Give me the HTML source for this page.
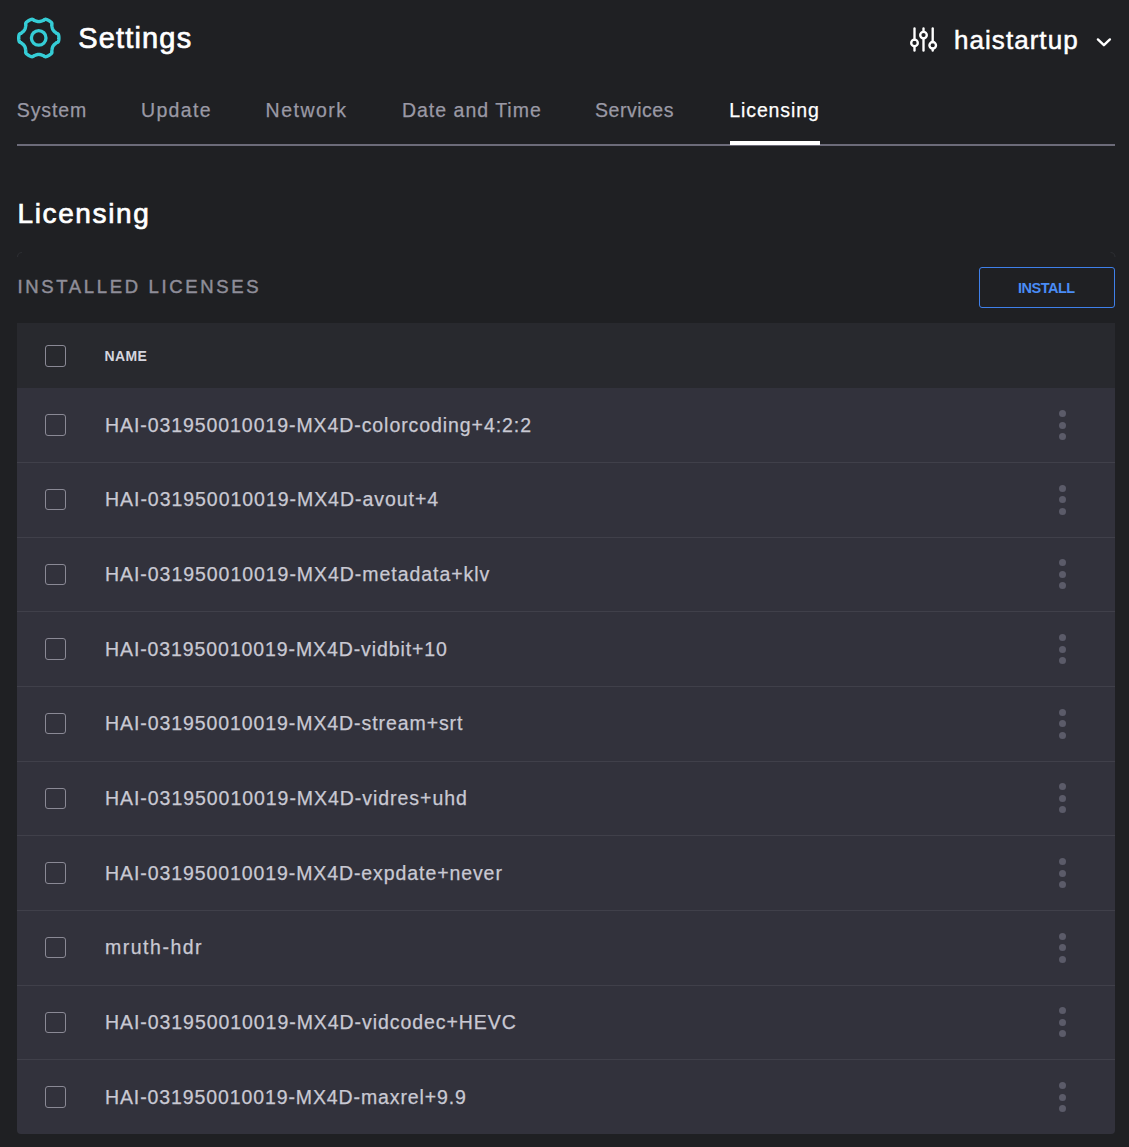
<!DOCTYPE html>
<html><head><meta charset="utf-8"><title>Settings - Licensing</title>
<style>
html,body{margin:0;padding:0;background:#1f2023;}
body{width:1129px;height:1147px;overflow:hidden;position:relative;font-family:"Liberation Sans",sans-serif;}
.t{position:absolute;line-height:1;white-space:nowrap;}
.abs{position:absolute;}
</style></head><body>
<svg class="abs" style="left:0;top:0" width="80" height="80" viewBox="0 0 80 80"><path d="M58.90 38.00 L58.90 38.35 L58.89 38.70 L58.87 39.05 L58.84 39.40 L58.81 39.75 L58.76 40.10 L58.71 40.44 L58.63 40.79 L58.53 41.13 L58.40 41.46 L58.20 41.77 L57.93 42.07 L57.53 42.33 L57.02 42.54 L56.43 42.72 L56.16 42.98 L55.88 43.22 L55.61 43.46 L55.34 43.70 L55.08 43.93 L54.82 44.15 L54.57 44.37 L54.33 44.59 L54.10 44.81 L53.89 45.04 L53.68 45.26 L53.49 45.49 L53.32 45.72 L53.15 45.96 L53.00 46.20 L52.87 46.45 L52.74 46.71 L52.63 46.98 L52.53 47.26 L52.44 47.55 L52.35 47.85 L52.28 48.16 L52.21 48.47 L52.14 48.80 L52.07 49.14 L52.01 49.48 L51.94 49.83 L51.87 50.18 L51.79 50.54 L51.70 50.90 L51.85 51.51 L51.91 52.06 L51.88 52.53 L51.77 52.92 L51.59 53.24 L51.37 53.53 L51.13 53.78 L50.87 54.02 L50.60 54.24 L50.32 54.45 L50.04 54.66 L49.74 54.85 L49.45 55.04 L49.15 55.23 L48.85 55.41 L48.54 55.58 L48.24 55.75 L47.92 55.91 L47.61 56.06 L47.29 56.20 L46.96 56.34 L46.64 56.46 L46.30 56.57 L45.96 56.65 L45.61 56.70 L45.24 56.69 L44.84 56.60 L44.42 56.39 L43.98 56.05 L43.52 55.63 L43.17 55.52 L42.82 55.41 L42.48 55.29 L42.14 55.18 L41.81 55.06 L41.48 54.95 L41.17 54.85 L40.86 54.75 L40.55 54.66 L40.25 54.58 L39.96 54.52 L39.66 54.47 L39.37 54.43 L39.09 54.41 L38.80 54.40 L38.51 54.41 L38.23 54.43 L37.94 54.47 L37.64 54.52 L37.35 54.58 L37.05 54.66 L36.74 54.75 L36.43 54.85 L36.12 54.95 L35.79 55.06 L35.46 55.18 L35.12 55.29 L34.78 55.41 L34.43 55.52 L34.08 55.63 L33.62 56.05 L33.18 56.39 L32.76 56.60 L32.36 56.69 L31.99 56.70 L31.64 56.65 L31.30 56.57 L30.96 56.46 L30.64 56.34 L30.31 56.20 L29.99 56.06 L29.68 55.91 L29.36 55.75 L29.06 55.58 L28.75 55.41 L28.45 55.23 L28.15 55.04 L27.86 54.85 L27.56 54.66 L27.28 54.45 L27.00 54.24 L26.73 54.02 L26.47 53.78 L26.23 53.53 L26.01 53.24 L25.83 52.92 L25.72 52.53 L25.69 52.06 L25.75 51.51 L25.90 50.90 L25.81 50.54 L25.73 50.18 L25.66 49.83 L25.59 49.48 L25.53 49.14 L25.46 48.80 L25.39 48.47 L25.32 48.16 L25.25 47.85 L25.16 47.55 L25.07 47.26 L24.97 46.98 L24.86 46.71 L24.73 46.45 L24.60 46.20 L24.45 45.96 L24.28 45.72 L24.11 45.49 L23.92 45.26 L23.71 45.04 L23.50 44.81 L23.27 44.59 L23.03 44.37 L22.78 44.15 L22.52 43.93 L22.26 43.70 L21.99 43.46 L21.72 43.22 L21.44 42.98 L21.17 42.72 L20.58 42.54 L20.07 42.33 L19.67 42.07 L19.40 41.77 L19.20 41.46 L19.07 41.13 L18.97 40.79 L18.89 40.44 L18.84 40.10 L18.79 39.75 L18.76 39.40 L18.73 39.05 L18.71 38.70 L18.70 38.35 L18.70 38.00 L18.70 37.65 L18.71 37.30 L18.73 36.95 L18.76 36.60 L18.79 36.25 L18.84 35.90 L18.89 35.56 L18.97 35.21 L19.07 34.87 L19.20 34.54 L19.40 34.23 L19.67 33.93 L20.07 33.67 L20.58 33.46 L21.17 33.28 L21.44 33.02 L21.72 32.78 L21.99 32.54 L22.26 32.30 L22.52 32.07 L22.78 31.85 L23.03 31.63 L23.27 31.41 L23.50 31.19 L23.71 30.96 L23.92 30.74 L24.11 30.51 L24.28 30.28 L24.45 30.04 L24.60 29.80 L24.73 29.55 L24.86 29.29 L24.97 29.02 L25.07 28.74 L25.16 28.45 L25.25 28.15 L25.32 27.84 L25.39 27.53 L25.46 27.20 L25.53 26.86 L25.59 26.52 L25.66 26.17 L25.73 25.82 L25.81 25.46 L25.90 25.10 L25.75 24.49 L25.69 23.94 L25.72 23.47 L25.83 23.08 L26.01 22.76 L26.23 22.47 L26.47 22.22 L26.73 21.98 L27.00 21.76 L27.28 21.55 L27.56 21.34 L27.86 21.15 L28.15 20.96 L28.45 20.77 L28.75 20.59 L29.06 20.42 L29.36 20.25 L29.68 20.09 L29.99 19.94 L30.31 19.80 L30.64 19.66 L30.96 19.54 L31.30 19.43 L31.64 19.35 L31.99 19.30 L32.36 19.31 L32.76 19.40 L33.18 19.61 L33.62 19.95 L34.08 20.37 L34.43 20.48 L34.78 20.59 L35.12 20.71 L35.46 20.82 L35.79 20.94 L36.12 21.05 L36.43 21.15 L36.74 21.25 L37.05 21.34 L37.35 21.42 L37.64 21.48 L37.94 21.53 L38.23 21.57 L38.51 21.59 L38.80 21.60 L39.09 21.59 L39.37 21.57 L39.66 21.53 L39.96 21.48 L40.25 21.42 L40.55 21.34 L40.86 21.25 L41.17 21.15 L41.48 21.05 L41.81 20.94 L42.14 20.82 L42.48 20.71 L42.82 20.59 L43.17 20.48 L43.52 20.37 L43.98 19.95 L44.42 19.61 L44.84 19.40 L45.24 19.31 L45.61 19.30 L45.96 19.35 L46.30 19.43 L46.64 19.54 L46.96 19.66 L47.29 19.80 L47.61 19.94 L47.92 20.09 L48.24 20.25 L48.54 20.42 L48.85 20.59 L49.15 20.77 L49.45 20.96 L49.74 21.15 L50.04 21.34 L50.32 21.55 L50.60 21.76 L50.87 21.98 L51.13 22.22 L51.37 22.47 L51.59 22.76 L51.77 23.08 L51.88 23.47 L51.91 23.94 L51.85 24.49 L51.70 25.10 L51.79 25.46 L51.87 25.82 L51.94 26.17 L52.01 26.52 L52.07 26.86 L52.14 27.20 L52.21 27.53 L52.28 27.84 L52.35 28.15 L52.44 28.45 L52.53 28.74 L52.63 29.02 L52.74 29.29 L52.87 29.55 L53.00 29.80 L53.15 30.04 L53.32 30.28 L53.49 30.51 L53.68 30.74 L53.89 30.96 L54.10 31.19 L54.33 31.41 L54.57 31.63 L54.82 31.85 L55.08 32.07 L55.34 32.30 L55.61 32.54 L55.88 32.78 L56.16 33.02 L56.43 33.28 L57.02 33.46 L57.53 33.67 L57.93 33.93 L58.20 34.23 L58.40 34.54 L58.53 34.87 L58.63 35.21 L58.71 35.56 L58.76 35.90 L58.81 36.25 L58.84 36.60 L58.87 36.95 L58.89 37.30 L58.90 37.65 Z" fill="none" stroke="#35cdd6" stroke-width="3.4" stroke-linejoin="round"/><circle cx="38.7" cy="37.9" r="7.3" fill="none" stroke="#35cdd6" stroke-width="3.3"/></svg>
<div id="settings" class="t" style="left:78.3px;top:24.12px;font-size:29px;color:#ffffff;font-weight:400;letter-spacing:1.15px;-webkit-text-stroke:0.7px #fff;">Settings</div>
<svg class="abs" style="left:900px;top:20px" width="45" height="40" viewBox="900 20 45 40" fill="none" stroke="#fff" stroke-width="2.35" stroke-linecap="round">
<line x1="914.5" y1="28.5" x2="914.5" y2="39.7"/><line x1="914.5" y1="46.1" x2="914.5" y2="50.6"/><circle cx="914.5" cy="42.9" r="3.3"/>
<line x1="923.5" y1="28.5" x2="923.5" y2="31.9"/><line x1="923.5" y1="38.3" x2="923.5" y2="50.6"/><circle cx="923.5" cy="35.1" r="3.3"/>
<line x1="932.7" y1="28.5" x2="932.7" y2="42.1"/><line x1="932.7" y1="48.5" x2="932.7" y2="50.6"/><circle cx="932.7" cy="45.3" r="3.3"/>
</svg>
<div id="user" class="t" style="left:954.0px;top:26.91px;font-size:26px;color:#ffffff;font-weight:400;letter-spacing:1.046px;-webkit-text-stroke:0.5px #fff;">haistartup</div>
<svg class="abs" style="left:1090px;top:30px" width="30" height="24" viewBox="1090 30 30 24"><polyline points="1097.9,39.4 1103.9,45.2 1109.9,39.4" fill="none" stroke="#fff" stroke-width="2.4" stroke-linecap="round" stroke-linejoin="round"/></svg>
<div id="tab0" class="t" style="left:16.8px;top:100.66px;font-size:19.5px;color:#9a99a5;font-weight:400;letter-spacing:0.9px;-webkit-text-stroke:0.25px #9a99a5;">System</div>
<div id="tab1" class="t" style="left:141.1px;top:100.66px;font-size:19.5px;color:#9a99a5;font-weight:400;letter-spacing:1.3px;-webkit-text-stroke:0.25px #9a99a5;">Update</div>
<div id="tab2" class="t" style="left:265.6px;top:100.66px;font-size:19.5px;color:#9a99a5;font-weight:400;letter-spacing:1.501px;-webkit-text-stroke:0.25px #9a99a5;">Network</div>
<div id="tab3" class="t" style="left:401.90000000000003px;top:100.66px;font-size:19.5px;color:#9a99a5;font-weight:400;letter-spacing:1.006px;-webkit-text-stroke:0.25px #9a99a5;">Date and Time</div>
<div id="tab4" class="t" style="left:595.1px;top:100.66px;font-size:19.5px;color:#9a99a5;font-weight:400;letter-spacing:0.507px;-webkit-text-stroke:0.25px #9a99a5;">Services</div>
<div id="tab5" class="t" style="left:729.3000000000001px;top:100.66px;font-size:19.5px;color:#ffffff;font-weight:400;letter-spacing:0.885px;-webkit-text-stroke:0.25px #ffffff;">Licensing</div>
<div class="abs" style="left:17px;top:144px;width:1098px;height:2px;background:#6c6b79"></div>
<div class="abs" style="left:730px;top:141px;width:90px;height:4px;background:#ffffff"></div>
<div id="h1" class="t" style="left:17.5px;top:199.85px;font-size:28px;color:#ffffff;font-weight:400;letter-spacing:1.615px;-webkit-text-stroke:0.7px #fff;">Licensing</div>
<div id="sec" class="t" style="left:17.5px;top:277.99px;font-size:18.5px;color:#8f8e99;font-weight:400;letter-spacing:2.646px;-webkit-text-stroke:0.45px #8f8e99;">INSTALLED LICENSES</div>
<svg class="abs" style="left:0;top:240px" width="1129" height="30" viewBox="0 240 1129 30"><path d="M17.5 257 A4.5 4.5 0 0 1 22 252.5" fill="none" stroke="#2c2d31" stroke-width="1.2"/><path d="M1110.5 252.5 A4.5 4.5 0 0 1 1115 257" fill="none" stroke="#2c2d31" stroke-width="1.2"/></svg>
<div class="abs" style="left:979px;top:267px;width:136px;height:41px;box-sizing:border-box;border:1.4px solid #3f80ea;border-radius:3px"></div>
<div id="inst" class="t" style="left:1018px;top:280.71px;font-size:14.5px;color:#4a8cf5;font-weight:700;letter-spacing:-0.502px;">INSTALL</div>
<div class="abs" style="left:17px;top:323px;width:1098px;height:811px;background:#32323c;border-radius:0 0 4px 4px;overflow:hidden">
<div class="abs" style="left:0;top:0;width:1098px;height:65.33px;background:#28292e"></div>
<div class="abs" style="left:0;top:139px;width:1098px;height:1px;background:#40404a"></div>
<div class="abs" style="left:0;top:214px;width:1098px;height:1px;background:#40404a"></div>
<div class="abs" style="left:0;top:288px;width:1098px;height:1px;background:#40404a"></div>
<div class="abs" style="left:0;top:363px;width:1098px;height:1px;background:#40404a"></div>
<div class="abs" style="left:0;top:438px;width:1098px;height:1px;background:#40404a"></div>
<div class="abs" style="left:0;top:512px;width:1098px;height:1px;background:#40404a"></div>
<div class="abs" style="left:0;top:587px;width:1098px;height:1px;background:#40404a"></div>
<div class="abs" style="left:0;top:662px;width:1098px;height:1px;background:#40404a"></div>
<div class="abs" style="left:0;top:736px;width:1098px;height:1px;background:#40404a"></div>
</div>
<div class="abs" style="left:45.2px;top:345.25px;width:21px;height:21.5px;box-sizing:border-box;border:1.4px solid #8a8995;border-radius:3px"></div>
<div id="name" class="t" style="left:104.6px;top:349.17px;font-size:14px;color:#d5d5de;font-weight:700;letter-spacing:0.33px;">NAME</div>
<div class="abs" style="left:45.2px;top:414.25px;width:21px;height:21.5px;box-sizing:border-box;border:1.4px solid #8a8995;border-radius:3px"></div>
<div id="r0" class="t" style="left:105px;top:415.56px;font-size:19.5px;color:#c9c9d3;font-weight:400;letter-spacing:0.926px;-webkit-text-stroke:0.25px #c9c9d3;">HAI-031950010019-MX4D-colorcoding+4:2:2</div>
<div class="abs" style="left:1058.9px;top:410.00px;width:7px;height:7px;border-radius:50%;background:#5b5b69"></div>
<div class="abs" style="left:1058.9px;top:421.50px;width:7px;height:7px;border-radius:50%;background:#5b5b69"></div>
<div class="abs" style="left:1058.9px;top:433.00px;width:7px;height:7px;border-radius:50%;background:#5b5b69"></div>
<div class="abs" style="left:45.2px;top:488.92px;width:21px;height:21.5px;box-sizing:border-box;border:1.4px solid #8a8995;border-radius:3px"></div>
<div id="r1" class="t" style="left:105px;top:490.23px;font-size:19.5px;color:#c9c9d3;font-weight:400;letter-spacing:0.96px;-webkit-text-stroke:0.25px #c9c9d3;">HAI-031950010019-MX4D-avout+4</div>
<div class="abs" style="left:1058.9px;top:484.67px;width:7px;height:7px;border-radius:50%;background:#5b5b69"></div>
<div class="abs" style="left:1058.9px;top:496.17px;width:7px;height:7px;border-radius:50%;background:#5b5b69"></div>
<div class="abs" style="left:1058.9px;top:507.67px;width:7px;height:7px;border-radius:50%;background:#5b5b69"></div>
<div class="abs" style="left:45.2px;top:563.59px;width:21px;height:21.5px;box-sizing:border-box;border:1.4px solid #8a8995;border-radius:3px"></div>
<div id="r2" class="t" style="left:105px;top:564.90px;font-size:19.5px;color:#c9c9d3;font-weight:400;letter-spacing:0.955px;-webkit-text-stroke:0.25px #c9c9d3;">HAI-031950010019-MX4D-metadata+klv</div>
<div class="abs" style="left:1058.9px;top:559.34px;width:7px;height:7px;border-radius:50%;background:#5b5b69"></div>
<div class="abs" style="left:1058.9px;top:570.84px;width:7px;height:7px;border-radius:50%;background:#5b5b69"></div>
<div class="abs" style="left:1058.9px;top:582.34px;width:7px;height:7px;border-radius:50%;background:#5b5b69"></div>
<div class="abs" style="left:45.2px;top:638.26px;width:21px;height:21.5px;box-sizing:border-box;border:1.4px solid #8a8995;border-radius:3px"></div>
<div id="r3" class="t" style="left:105px;top:639.57px;font-size:19.5px;color:#c9c9d3;font-weight:400;letter-spacing:0.898px;-webkit-text-stroke:0.25px #c9c9d3;">HAI-031950010019-MX4D-vidbit+10</div>
<div class="abs" style="left:1058.9px;top:634.01px;width:7px;height:7px;border-radius:50%;background:#5b5b69"></div>
<div class="abs" style="left:1058.9px;top:645.51px;width:7px;height:7px;border-radius:50%;background:#5b5b69"></div>
<div class="abs" style="left:1058.9px;top:657.01px;width:7px;height:7px;border-radius:50%;background:#5b5b69"></div>
<div class="abs" style="left:45.2px;top:712.93px;width:21px;height:21.5px;box-sizing:border-box;border:1.4px solid #8a8995;border-radius:3px"></div>
<div id="r4" class="t" style="left:105px;top:714.24px;font-size:19.5px;color:#c9c9d3;font-weight:400;letter-spacing:0.919px;-webkit-text-stroke:0.25px #c9c9d3;">HAI-031950010019-MX4D-stream+srt</div>
<div class="abs" style="left:1058.9px;top:708.68px;width:7px;height:7px;border-radius:50%;background:#5b5b69"></div>
<div class="abs" style="left:1058.9px;top:720.18px;width:7px;height:7px;border-radius:50%;background:#5b5b69"></div>
<div class="abs" style="left:1058.9px;top:731.68px;width:7px;height:7px;border-radius:50%;background:#5b5b69"></div>
<div class="abs" style="left:45.2px;top:787.60px;width:21px;height:21.5px;box-sizing:border-box;border:1.4px solid #8a8995;border-radius:3px"></div>
<div id="r5" class="t" style="left:105px;top:788.91px;font-size:19.5px;color:#c9c9d3;font-weight:400;letter-spacing:0.955px;-webkit-text-stroke:0.25px #c9c9d3;">HAI-031950010019-MX4D-vidres+uhd</div>
<div class="abs" style="left:1058.9px;top:783.35px;width:7px;height:7px;border-radius:50%;background:#5b5b69"></div>
<div class="abs" style="left:1058.9px;top:794.85px;width:7px;height:7px;border-radius:50%;background:#5b5b69"></div>
<div class="abs" style="left:1058.9px;top:806.35px;width:7px;height:7px;border-radius:50%;background:#5b5b69"></div>
<div class="abs" style="left:45.2px;top:862.27px;width:21px;height:21.5px;box-sizing:border-box;border:1.4px solid #8a8995;border-radius:3px"></div>
<div id="r6" class="t" style="left:105px;top:863.58px;font-size:19.5px;color:#c9c9d3;font-weight:400;letter-spacing:0.912px;-webkit-text-stroke:0.25px #c9c9d3;">HAI-031950010019-MX4D-expdate+never</div>
<div class="abs" style="left:1058.9px;top:858.02px;width:7px;height:7px;border-radius:50%;background:#5b5b69"></div>
<div class="abs" style="left:1058.9px;top:869.52px;width:7px;height:7px;border-radius:50%;background:#5b5b69"></div>
<div class="abs" style="left:1058.9px;top:881.02px;width:7px;height:7px;border-radius:50%;background:#5b5b69"></div>
<div class="abs" style="left:45.2px;top:936.94px;width:21px;height:21.5px;box-sizing:border-box;border:1.4px solid #8a8995;border-radius:3px"></div>
<div id="r7" class="t" style="left:105px;top:938.25px;font-size:19.5px;color:#c9c9d3;font-weight:400;letter-spacing:1.51px;-webkit-text-stroke:0.25px #c9c9d3;">mruth-hdr</div>
<div class="abs" style="left:1058.9px;top:932.69px;width:7px;height:7px;border-radius:50%;background:#5b5b69"></div>
<div class="abs" style="left:1058.9px;top:944.19px;width:7px;height:7px;border-radius:50%;background:#5b5b69"></div>
<div class="abs" style="left:1058.9px;top:955.69px;width:7px;height:7px;border-radius:50%;background:#5b5b69"></div>
<div class="abs" style="left:45.2px;top:1011.61px;width:21px;height:21.5px;box-sizing:border-box;border:1.4px solid #8a8995;border-radius:3px"></div>
<div id="r8" class="t" style="left:105px;top:1012.92px;font-size:19.5px;color:#c9c9d3;font-weight:400;letter-spacing:0.941px;-webkit-text-stroke:0.25px #c9c9d3;">HAI-031950010019-MX4D-vidcodec+HEVC</div>
<div class="abs" style="left:1058.9px;top:1007.36px;width:7px;height:7px;border-radius:50%;background:#5b5b69"></div>
<div class="abs" style="left:1058.9px;top:1018.86px;width:7px;height:7px;border-radius:50%;background:#5b5b69"></div>
<div class="abs" style="left:1058.9px;top:1030.36px;width:7px;height:7px;border-radius:50%;background:#5b5b69"></div>
<div class="abs" style="left:45.2px;top:1086.28px;width:21px;height:21.5px;box-sizing:border-box;border:1.4px solid #8a8995;border-radius:3px"></div>
<div id="r9" class="t" style="left:105px;top:1087.59px;font-size:19.5px;color:#c9c9d3;font-weight:400;letter-spacing:0.891px;-webkit-text-stroke:0.25px #c9c9d3;">HAI-031950010019-MX4D-maxrel+9.9</div>
<div class="abs" style="left:1058.9px;top:1082.03px;width:7px;height:7px;border-radius:50%;background:#5b5b69"></div>
<div class="abs" style="left:1058.9px;top:1093.53px;width:7px;height:7px;border-radius:50%;background:#5b5b69"></div>
<div class="abs" style="left:1058.9px;top:1105.03px;width:7px;height:7px;border-radius:50%;background:#5b5b69"></div>
</body></html>
